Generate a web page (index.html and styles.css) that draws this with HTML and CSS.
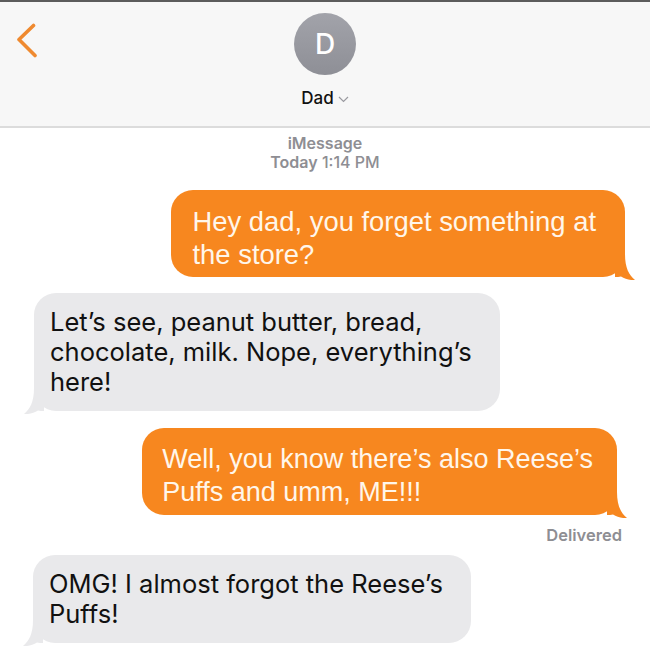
FILE: index.html
```html
<!DOCTYPE html>
<html>
<head>
<meta charset="utf-8">
<link rel="stylesheet" href="styles.css">
</head>
<body>
<div class="screen">
  <div class="topbar"></div>
  <header class="nav">
    <div class="back">
      <svg width="24" height="36" viewBox="0 0 24 36"><path d="M18.5 2.5 L4 16.5 L20 32.5" fill="none" stroke="#ef8a30" stroke-width="3.6" stroke-linecap="round" stroke-linejoin="round"/></svg>
    </div>
    <div class="contact">
      <div class="avatar">D</div>
      <div class="name">Dad<svg class="caret" width="11" height="7" viewBox="0 0 11 7"><path d="M1 1 L5.5 5.5 L10 1" fill="none" stroke="#9a9aa0" stroke-width="1.2"/></svg></div>
    </div>
    <div></div>
  </header>
  <main class="thread">
    <div class="meta">
      <div class="service">iMessage</div>
      <div class="time"><span class="day">Today</span> 1:14 PM</div>
    </div>
    <div class="msg sent s1">Hey dad, you forget something at<br>the store?<svg class="tail" width="20" height="26" viewBox="0 0 20 26"><path d="M0 0 L10 0 C10 14 14 21 20 26 C15 26.5 10 25 6 22.5 C4 23 2 23 0 23 Z"/></svg></div>
    <div class="msg recv">Let’s see, peanut butter, bread,<br>chocolate, milk. Nope, everything’s<br>here!<svg class="tail" width="20" height="26" viewBox="0 0 20 26"><path d="M0 0 L10 0 C10 14 14 21 20 26 C15 26.5 10 25 6 22.5 C4 23 2 23 0 23 Z"/></svg></div>
    <div class="msg sent s2">Well, you know there’s also Reese’s<br>Puffs and umm, ME!!!<svg class="tail" width="20" height="26" viewBox="0 0 20 26"><path d="M0 0 L10 0 C10 14 14 21 20 26 C15 26.5 10 25 6 22.5 C4 23 2 23 0 23 Z"/></svg></div>
    <div class="status">Delivered</div>
    <div class="msg recv r2">OMG! I almost forgot the Reese’s<br>Puffs!<svg class="tail" width="20" height="26" viewBox="0 0 20 26"><path d="M0 0 L10 0 C10 14 14 21 20 26 C15 26.5 10 25 6 22.5 C4 23 2 23 0 23 Z"/></svg></div>
  </main>
</div>
</body>
</html>
```
FILE: styles.css
```css
* { box-sizing: border-box; }
body {
  margin: 0;
  background: #fff;
  font-family: Inter, "Liberation Sans", sans-serif;
}
.screen {
  width: 650px;
  height: 652px;
  overflow: hidden;
  background: #fff;
}
.topbar {
  height: 2px;
  background: #5c5c5c;
}
.nav {
  display: grid;
  grid-template-columns: 1fr auto 1fr;
  height: 126px;
  background: #f7f7f7;
  border-bottom: 2px solid #dcdcdc;
}
.back {
  padding: 21px 0 0 15px;
}
.back svg { display: block; }
.contact {
  display: flex;
  flex-direction: column;
  align-items: center;
  padding-top: 11px;
}
.avatar {
  width: 62px;
  height: 62px;
  border-radius: 50%;
  background: linear-gradient(#a2a3aa, #8e8f96);
  color: #fff;
  font-size: 28px;
  font-weight: 500;
  line-height: 62px;
  text-align: center;
}
.name {
  margin-top: 13px;
  font-size: 17px;
  font-weight: 500;
  line-height: 20px;
  color: #111;
  display: flex;
  align-items: center;
  gap: 4px;
}
.caret { display: block; margin-top: 3px; }
.thread {
  display: flex;
  flex-direction: column;
  padding-top: 6px;
}
.meta {
  text-align: center;
  color: #8e8e93;
  font-size: 16px;
  font-weight: 600;
  line-height: 19px;
}
.time { font-weight: 500; }
.day { font-weight: 600; }
.msg {
  position: relative;
  border-radius: 22px;
}
.tail {
  position: absolute;
  bottom: -3px;
  display: block;
}
.sent {
  align-self: flex-end;
  margin: 18px 29px 0 0;
  background: #f7871f;
  color: #fff6ea;
  font-family: "Liberation Sans", Arial, sans-serif;
  font-size: 27px;
  line-height: 33px;
  padding: 15px 24px 6px 20px;
}
.s1 { font-size: 27.4px; margin-right: 25px; padding-left: 22px; padding-right: 29px; }
.sent .tail { right: -10px; fill: #f7871f; }
.recv {
  align-self: flex-start;
  margin: 16px 0 0 34px;
  background: #e9e9eb;
  color: #111;
  font-size: 25.5px;
  line-height: 30px;
  padding: 14px 28px 14px 16px;
}
.recv .tail { left: -10px; fill: #e9e9eb; transform: scaleX(-1); }
.s2 { margin-top: 17px; margin-right: 33px; }
.status {
  align-self: flex-end;
  margin: 10px 28px 0 0;
  color: #8e8e93;
  font-size: 16.5px;
  font-weight: 600;
  line-height: 20px;
}
.r2 { margin-top: 10px; margin-left: 33px; }
```
